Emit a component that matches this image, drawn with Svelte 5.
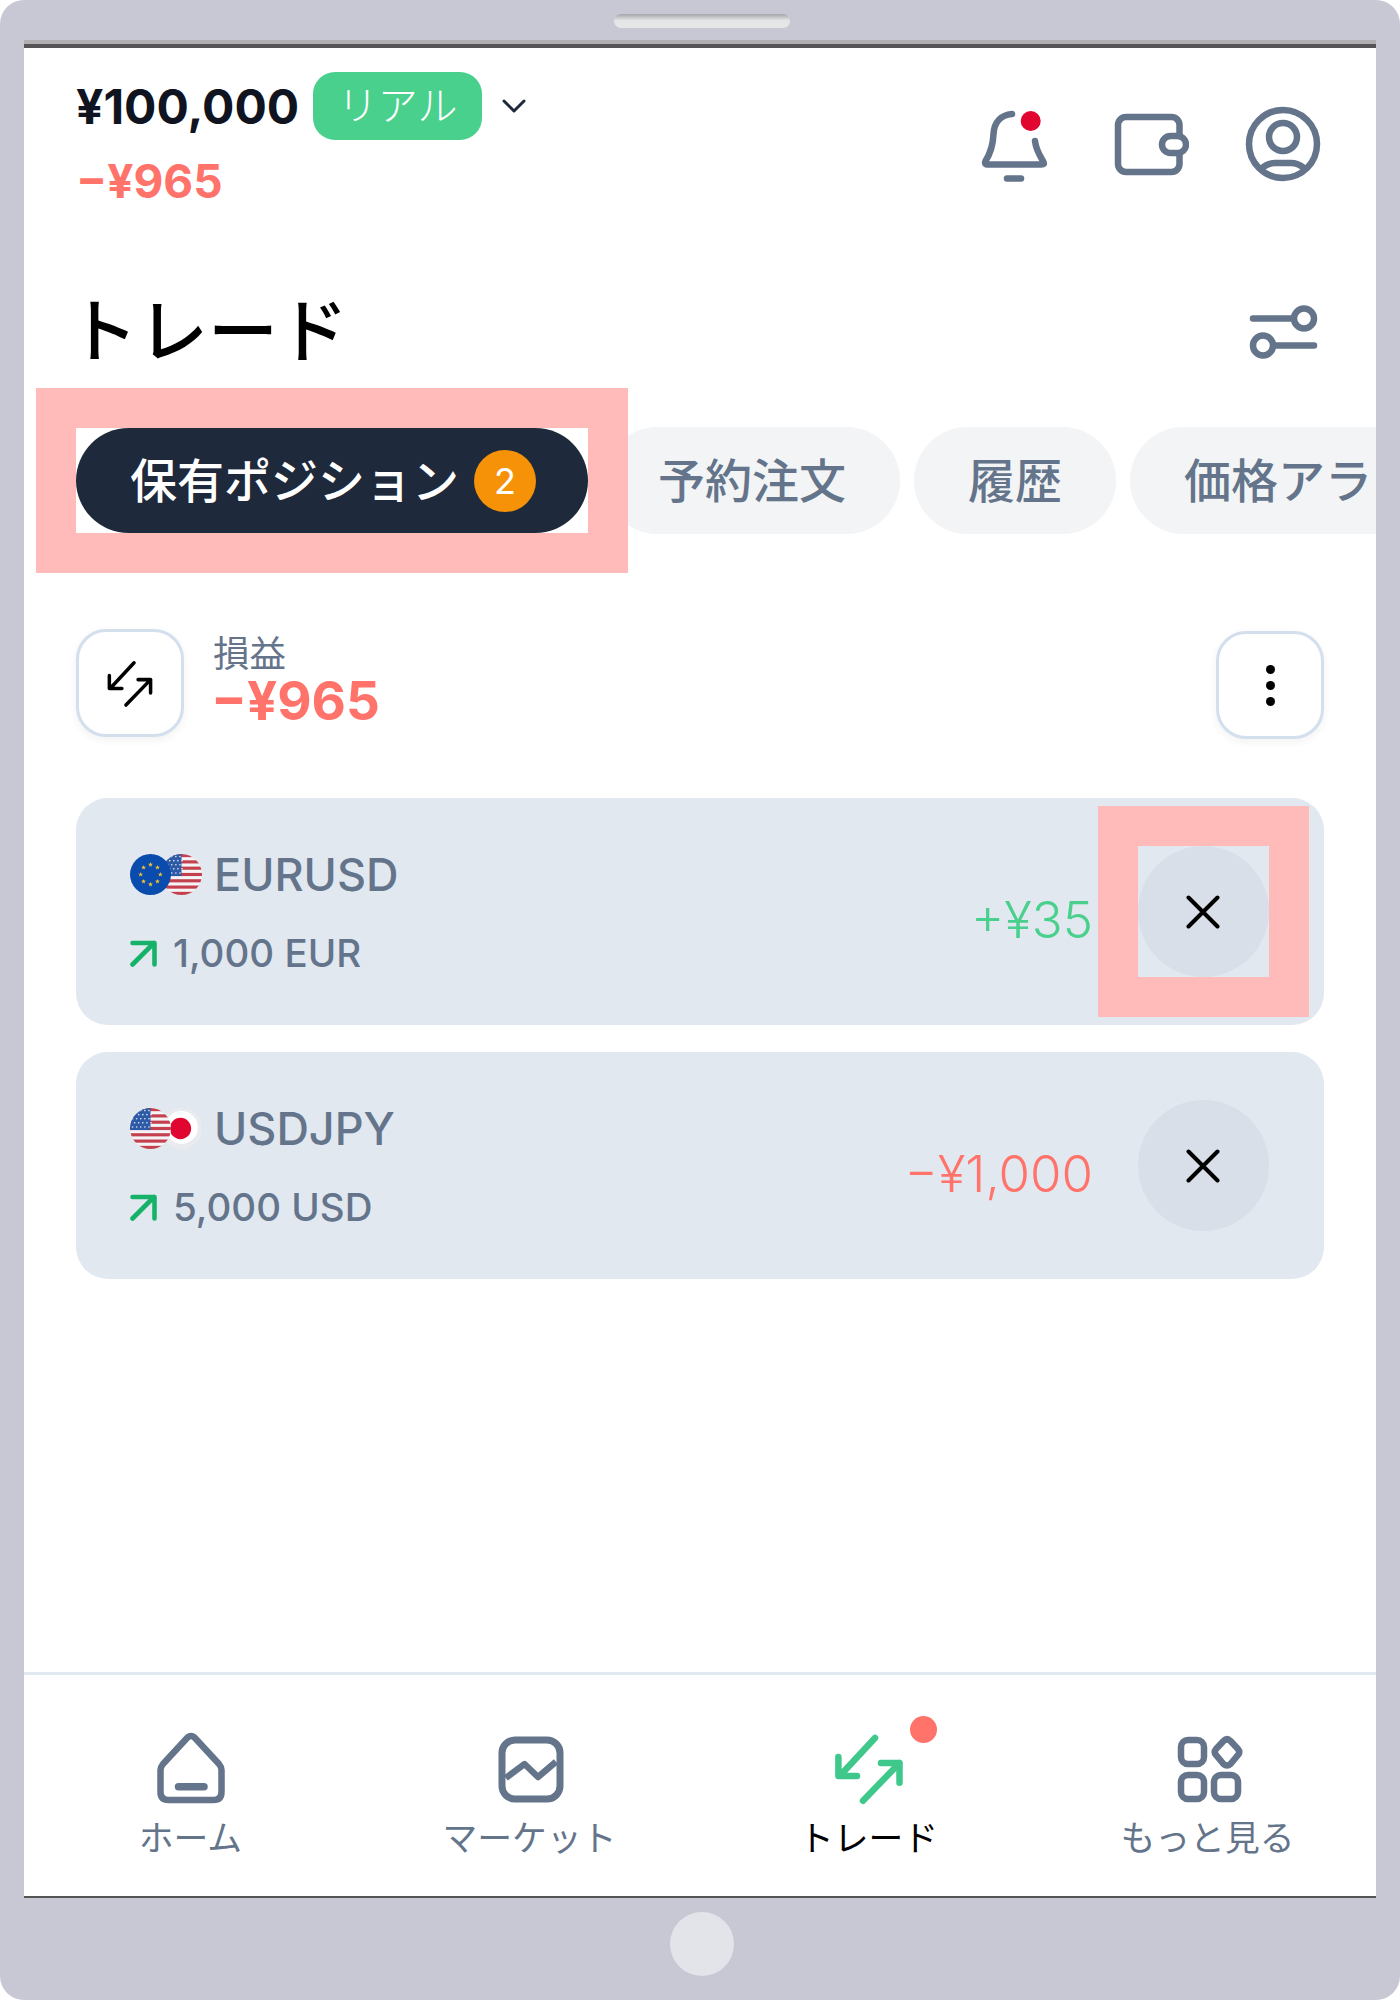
<script>
  const star = (cx, cy, r) => {
    const pts = [];
    for (let i = 0; i < 10; i++) {
      const a = (i * Math.PI) / 5;
      const rr = i % 2 ? r * 0.42 : r;
      pts.push(`${(cx + rr * Math.sin(a)).toFixed(2)},${(cy - rr * Math.cos(a)).toFixed(2)}`);
    }
    return pts.join(' ');
  };
  const stars = Array.from({ length: 8 }, (_, i) => {
    const a = (i * Math.PI) / 4;
    return star(20 + 9.6 * Math.sin(a), 20 - 9.6 * Math.cos(a), 2.5);
  });
  const stripes = [0, 1, 2, 3, 4, 5, 6];
  const dots = [];
  for (let r = 0; r < 5; r++) for (let c = 0; c < 5; c++) dots.push({ x: 2.5 + c * 4 + (r % 2) * 2, y: 2.5 + r * 4 });
  const tabs = ['予約注文', '履歴', '価格アラート'];
</script>

{#snippet eu()}
  <svg class="flag" viewBox="0 0 40 40">
    <rect width="40" height="40" fill="#0a4bae" />
    {#each stars as s}<polygon points={s} fill="#f2c230" />{/each}
  </svg>
{/snippet}

{#snippet us()}
  <svg class="flag" viewBox="0 0 40 40">
    <rect width="40" height="40" fill="#f4f4f6" />
    {#each stripes as i}<rect y={i * 6.15} width="40" height="3.08" fill="#c4404f" />{/each}
    <rect width="20" height="21.5" fill="#2c5aa6" />
    {#each dots as d}<circle cx={d.x} cy={d.y} r="0.8" fill="#dfe7f3" />{/each}
  </svg>
{/snippet}

{#snippet jp()}
  <svg class="flag" viewBox="0 0 40 40">
    <rect width="40" height="40" fill="#e9ebef" />
    <circle cx="20" cy="19" r="16" fill="#fff" />
    <circle cx="19" cy="20" r="10.4" fill="#e0062f" />
  </svg>
{/snippet}

{#snippet swap(color, sw)}
  <g fill="none" stroke={color} stroke-width={sw} stroke-linecap="round" stroke-linejoin="round">
    <path d="M46 10 11.6 47M9.4 29V48H28" />
    <path d="M34 72.7 70.5 35M52 35H70.5V54.7" />
  </g>
{/snippet}

{#snippet up()}
  <svg class="up" viewBox="0 0 27 27">
    <path d="M2.5 24.5 24 3M2.5 3H24.5V24.5" fill="none" stroke="#17b26a" stroke-width="4.6" stroke-linecap="round" stroke-linejoin="round" />
  </svg>
{/snippet}

{#snippet x()}
  <svg class="x" viewBox="0 0 34 34">
    <path d="M2.500 2.500 31.500 31.500M31.500 2.500 2.500 31.500" stroke="#000" stroke-width="4" stroke-linecap="round" />
  </svg>
{/snippet}

<div class="device">
  <div class="top"><div class="speaker"></div></div>
  <div class="screen">
    <header class="head">
      <div class="acct">
        <div class="bal">
          <span class="amount">¥100,000</span>
          <span class="real">リアル</span>
          <svg class="chev" viewBox="0 0 24 14"><path d="M2 2 12 12 22 2" fill="none" stroke="#1e293b" stroke-width="3" stroke-linecap="round" stroke-linejoin="round" /></svg>
        </div>
        <div class="loss">−¥965</div>
      </div>
      <div class="tools">
        <svg class="ico" viewBox="0 0 80 80">
          <g fill="none" stroke="#64748b" stroke-width="6.500" stroke-linecap="round" stroke-linejoin="round">
            <path d="M37 10C26 11 19 18 18.5 30 18 42 15 50 10.5 57 9 60.500 12 60.500 12 60.500H66C69.500 60.500 69.500 60 68 57 64 50 61 46 60 37" />
            <path d="M32 74.500H46" />
          </g>
          <circle cx="55.700" cy="17" r="10" fill="#e0062f" />
        </svg>
        <svg class="ico" viewBox="0 0 80 80">
          <rect x="9" y="13" width="61.500" height="55" rx="8" fill="none" stroke="#64748b" stroke-width="6.500" />
          <rect x="53" y="32" width="24" height="17" rx="8.500" fill="#fff" stroke="#64748b" stroke-width="6.500" />
        </svg>
        <svg class="ico" viewBox="0 0 80 80">
          <g fill="none" stroke="#64748b" stroke-width="6.500">
            <circle cx="40" cy="40" r="34" />
            <circle cx="40" cy="33" r="14" />
            <path d="M19 64Q25 59 32 59H48Q55 59 61 64" />
          </g>
        </svg>
      </div>
    </header>

    <div class="titlebar">
      <h1>トレード</h1>
      <svg class="ico filter" viewBox="0 0 80 80">
        <g fill="none" stroke="#64748b" stroke-width="6.500" stroke-linecap="round">
          <path d="M10 26.500H50M33 53.500H71" />
          <circle cx="61" cy="26.500" r="10" />
          <circle cx="20" cy="53.500" r="10" />
        </g>
      </svg>
    </div>

    <div class="tabs">
      <div class="hl">
        <div class="tab active"><span class="tab-t">保有ポジション</span><span class="count">2</span></div>
      </div>
      {#each tabs as t}<div class="tab">{t}</div>{/each}
    </div>

    <div class="summary">
      <button class="sq">
        <svg class="swap" viewBox="0 0 80 80">{@render swap('#000', 5.2)}</svg>
      </button>
      <div class="pl">
        <div class="pl-label">損益</div>
        <div class="pl-val">−¥965</div>
      </div>
      <button class="sq dots" aria-label="more"><i></i><i></i><i></i></button>
    </div>

    <div class="cards">
      <div class="card">
        <div class="info">
          <div class="pair">
            <span class="flags">{@render eu()}{@render us()}</span>EURUSD
          </div>
          <div class="vol">{@render up()}1,000 EUR</div>
        </div>
        <div class="pnl gain">+¥35</div>
        <div class="close-wrap marked"><button class="close" aria-label="close">{@render x()}</button></div>
      </div>
      <div class="card">
        <div class="info">
          <div class="pair">
            <span class="flags">{@render us()}{@render jp()}</span>USDJPY
          </div>
          <div class="vol">{@render up()}5,000 USD</div>
        </div>
        <div class="pnl lose">−¥1,000</div>
        <div class="close-wrap"><button class="close" aria-label="close">{@render x()}</button></div>
      </div>
    </div>

    <nav class="nav">
      <div class="item">
        <svg class="ico" viewBox="0 0 80 80">
          <path d="M36.500 9.500Q40 6.500 43.500 9.500L68 36Q70.500 39 70.500 42V64Q70.500 72 62.500 72H17.500Q9.500 72 9.500 64V42Q9.500 39 12 36Z" fill="none" stroke="#64748b" stroke-width="6.500" stroke-linejoin="round" />
          <path d="M27.500 58.700H53" stroke="#64748b" stroke-width="7.500" stroke-linecap="round" />
        </svg>
        <span>ホーム</span>
      </div>
      <div class="item">
        <svg class="ico" viewBox="0 0 80 80">
          <rect x="12" y="12" width="58" height="59" rx="13" fill="none" stroke="#64748b" stroke-width="7" />
          <path d="M15.800 50 34.500 36 48 49 66 33.700" fill="none" stroke="#64748b" stroke-width="6.500" stroke-linejoin="round" />
        </svg>
        <span>マーケット</span>
      </div>
      <div class="item current">
        <svg class="ico" viewBox="0 0 80 80">{@render swap('#3fc88c', 6.500)}</svg>
        <i class="pip"></i>
        <span>トレード</span>
      </div>
      <div class="item">
        <svg class="ico" viewBox="0 0 80 80">
          <g fill="none" stroke="#64748b" stroke-width="6.500" stroke-linejoin="round">
            <rect x="13" y="12" width="23" height="24" rx="7" />
            <rect x="13" y="47" width="23" height="24" rx="7" />
            <rect x="46" y="47" width="24" height="24" rx="7" />
            <path d="M55.500 13Q59 9.500 62.500 13L70 21Q72.500 24 70 27L62.500 36Q59 39 55.500 36L48 27Q45.500 24 48 21Z" />
          </g>
        </svg>
        <span>もっと見る</span>
      </div>
    </nav>
  </div>
  <div class="bottom"><div class="home-btn"></div></div>
</div>

<style>
  :global(body) {
    background: #fff;
  }
  .device {
    width: 1400px;
    height: 2000px;
    background: #c8c8d4;
    border-radius: 24px;
    display: flex;
    flex-direction: column;
    overflow: hidden;
    font-family: Inter, "Noto Sans CJK JP", sans-serif;
  }
  .top {
    height: 40px;
    display: flex;
    justify-content: center;
    padding-top: 14px;
    box-sizing: border-box;
  }
  .speaker {
    width: 176px;
    height: 14px;
    border-radius: 7px;
    background: linear-gradient(#a3a5a8, #e3e5e6 45%, #e6e8e8);
    margin-left: 4px;
  }
  .screen {
    height: 1858px;
    margin: 0 24px;
    padding-top: 4px;
    background: #fff;
    border-top: 4px solid #b1afb2;
    border-bottom: 2px solid #555;
    box-shadow: inset 0 4px 0 #555;
    box-sizing: border-box;
    display: flex;
    flex-direction: column;
    overflow: hidden;
  }
  .bottom {
    flex: 1;
    display: flex;
    justify-content: center;
    padding-top: 14px;
  }
  .home-btn {
    width: 64px;
    height: 64px;
    border-radius: 50%;
    background: #e2e4ea;
    margin-left: 4px;
  }
  .head {
    height: 240px;
    flex: none;
    padding: 24px 53px 0 52px;
    box-sizing: border-box;
    display: flex;
    justify-content: space-between;
  }
  .bal {
    display: flex;
    align-items: center;
    height: 68px;
  }
  .amount {
    font-size: 48px;
    font-weight: 700;
    color: #0f1420;
  }
  .real {
    margin-left: 14px;
    width: 169px;
    height: 68px;
    line-height: 62px;
    border-radius: 22px;
    background: #48d08c;
    color: #fff;
    font-size: 40px;
    text-align: center;
    font-family: "Noto Sans CJK JP", sans-serif;
    font-weight: 300;
  }
  .chev {
    width: 24px;
    height: 14px;
    margin-left: 20px;
  }
  .loss {
    margin-top: 14px;
    font-size: 46px;
    line-height: 54px;
    font-weight: 700;
    color: #ff736a;
  }
  .tools {
    display: flex;
    gap: 54px;
    padding-top: 32px;
  }
  .ico {
    width: 80px;
    height: 80px;
    flex: none;
    display: block;
  }
  .filter {
    margin-top: 4px;
  }
  .titlebar {
    height: 84px;
    flex: none;
    padding: 0 53px 0 52px;
    display: flex;
    justify-content: space-between;
    align-items: center;
  }
  h1 {
    margin: -6px 0 0 -8px;
    font-size: 70px;
    font-weight: 500;
    line-height: 84px;
    color: #000;
    font-family: "Noto Sans CJK JP", sans-serif;
  }
  .tabs {
    margin-top: 55px;
    padding-left: 52px;
    display: flex;
    align-items: center;
    gap: 14px;
    flex: none;
    height: 107px;
  }
  .hl {
    flex: none;
    background: #fff;
    outline: 40px solid #ffbaba;
    position: relative;
    z-index: 1;
    margin-right: 2px;
  }
  .tab {
    flex: none;
    height: 107px;
    box-sizing: border-box;
    padding: 0 54px 7px;
    border-radius: 54px;
    background: #f3f4f6;
    color: #64748b;
    font-family: "Noto Sans CJK JP", sans-serif;
    font-size: 47px;
    font-weight: 500;
    display: flex;
    align-items: center;
    white-space: nowrap;
  }
  .tab.active {
    background: #1e293b;
    color: #fff;
    width: 512px;
    height: 105px;
    border-radius: 53px;
    padding: 0 52px 0 54px;
    justify-content: space-between;
  }
  .tab-t {
    margin-bottom: 7px;
  }
  .count {
    width: 62px;
    height: 62px;
    border-radius: 50%;
    background: #f69208;
    font-family: Inter, sans-serif;
    font-size: 36px;
    font-weight: 400;
    display: flex;
    align-items: center;
    justify-content: center;
  }
  .summary {
    margin-top: 95px;
    padding: 0 52px;
    display: flex;
    align-items: flex-start;
    flex: none;
  }
  .sq {
    width: 108px;
    height: 108px;
    box-sizing: border-box;
    border: 3.500px solid #d4dfee;
    border-radius: 30px;
    background: #fff;
    box-shadow: 0 3px 8px rgba(30, 41, 59, 0.06);
    padding: 0;
    display: flex;
    align-items: center;
    justify-content: center;
  }
  .swap {
    width: 54px;
    height: 54px;
  }
  .pl {
    margin-left: 29px;
    padding-top: 2px;
    flex: 1;
  }
  .pl-label {
    font-size: 36.500px;
    line-height: 42px;
    color: #64748b;
    font-family: "Noto Sans CJK JP", sans-serif;
  }
  .pl-val {
    font-size: 53px;
    line-height: 52px;
    font-weight: 700;
    color: #ff736a;
    margin: 2px 0 0 -2px;
  }
  .dots {
    flex-direction: column;
    gap: 7px;
    margin-top: 2px;
  }
  .dots i {
    width: 9px;
    height: 9px;
    border-radius: 50%;
    background: #000;
  }
  .cards {
    margin-top: 59px;
    padding: 0 52px;
    display: flex;
    flex-direction: column;
    gap: 27px;
    flex: 1;
  }
  .card {
    height: 227px;
    box-sizing: border-box;
    padding-right: 55px;
    border-radius: 32px;
    background: #e2e8f0;
    display: flex;
    align-items: center;
  }
  .info {
    flex: 1;
    align-self: flex-start;
    padding: 53px 0 0 54px;
    color: #64748b;
  }
  .pair {
    display: flex;
    align-items: center;
    height: 46px;
    font-size: 45px;
    font-weight: 500;
  }
  .flags {
    display: flex;
    width: 84px;
    flex: none;
  }
  .flag {
    width: 41px;
    height: 41px;
    border-radius: 50%;
    position: relative;
    flex: none;
  }
  .flag:first-child {
    z-index: 1;
  }
  .flag + .flag {
    margin-left: -10px;
  }
  .vol {
    margin-top: 36px;
    display: flex;
    align-items: center;
    height: 40px;
    font-size: 38.500px;
    font-weight: 500;
  }
  .up {
    width: 27px;
    height: 27px;
    margin-right: 16px;
    flex: none;
  }
  .pnl {
    margin-right: 45px;
    padding-top: 16px;
    font-size: 51px;
    font-weight: 300;
  }
  .gain {
    color: #48d08c;
  }
  .lose {
    color: #ff736a;
  }
  .close-wrap {
    width: 131px;
    height: 131px;
    flex: none;
  }
  .marked {
    outline: 40px solid #ffbaba;
  }
  .close {
    width: 131px;
    height: 131px;
    border: 0;
    padding: 0 2px 0 0;
    border-radius: 50%;
    background: #d8dfe9;
    display: flex;
    align-items: center;
    justify-content: center;
  }
  .x {
    width: 34px;
    height: 34px;
  }
  .nav {
    height: 224px;
    flex: none;
    border-top: 3px solid #e2e8f0;
    padding-top: 53px;
    box-sizing: border-box;
    display: flex;
    margin-left: -3px;
  }
  .item {
    width: 339px;
    flex: none;
    position: relative;
    display: flex;
    flex-direction: column;
    align-items: center;
    color: #64748b;
    font-family: "Noto Sans CJK JP", sans-serif;
    font-size: 34.800px;
    line-height: 40px;
  }
  .item span {
    margin-top: 8px;
  }
  .current {
    color: #000;
  }
  .pip {
    position: absolute;
    width: 27px;
    height: 27px;
    border-radius: 50%;
    background: #ff736a;
    left: 211px;
    top: -12px;
  }
</style>
